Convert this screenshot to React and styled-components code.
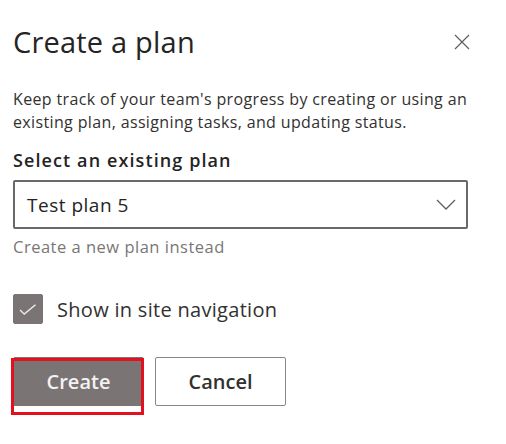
import React from "react";
import styled, { createGlobalStyle } from "styled-components";

const Global = createGlobalStyle`
  html, body { margin: 0; padding: 0; background: #ffffff; }
  body { font-family: "Open Sans", "Noto Sans", sans-serif; color: #323130; }
  * { box-sizing: border-box; }
`;

const Panel = styled.div`
  width: 506px;
  height: 444px;
  padding: 24px 38px 0 13px;
  display: flex;
  flex-direction: column;
  align-items: stretch;
`;

const Header = styled.div`
  display: flex;
  align-items: center;
  justify-content: space-between;
`;

const Title = styled.h1`
  margin: 0;
  font-size: 29px;
  line-height: 36px;
  letter-spacing: 0.2px;
  font-weight: 400;
  color: #252423;
`;

const CloseButton = styled.button`
  border: 0;
  background: none;
  padding: 0;
  margin-right: -2px;
  width: 16px;
  height: 16px;
  display: flex;
  color: #605e5c;
  cursor: pointer;
`;

const Description = styled.p`
  margin: 28px -14px 0 0;
  font-size: 16px;
  line-height: 23px;
  letter-spacing: 0.36px;
  color: #323130;
`;

const FieldLabel = styled.div`
  margin-top: 14px;
  font-size: 18px;
  line-height: 24px;
  letter-spacing: 1.1px;
  font-weight: 600;
  color: #252423;
`;

const Dropdown = styled.div`
  margin-top: 8px;
  height: 49px;
  border: 2px solid #6b6967;
  border-radius: 2px;
  display: flex;
  align-items: center;
  justify-content: space-between;
  padding: 0 10px 0 12px;
  font-size: 19px;
  letter-spacing: 0.5px;
  color: #252423;
`;

const Chevron = styled.svg`
  width: 20px;
  height: 11px;
  color: #605e5c;
`;

const Hint = styled.div`
  margin-top: 7px;
  font-size: 16.5px;
  line-height: 22px;
  letter-spacing: 0.5px;
  color: #797775;
`;

const CheckRow = styled.label`
  margin-top: 36px;
  display: flex;
  align-items: center;
  gap: 14px;
  font-size: 20px;
  letter-spacing: 0.3px;
  color: #323130;
`;

const CheckBox = styled.span`
  width: 30px;
  height: 30px;
  border-radius: 2px;
  background: ${(p) => (p.$checked ? "#7a7574" : "#ffffff")};
  border: 1px solid #7a7574;
  display: flex;
  align-items: center;
  justify-content: center;
`;

const Actions = styled.div`
  margin-top: 33px;
  display: flex;
  gap: 11px;
`;

const Button = styled.button`
  position: relative;
  width: 131px;
  height: 49px;
  border-radius: 2px;
  font-family: inherit;
  font-size: 20px;
  font-weight: 600;
  background: ${(p) => (p.$primary ? "#7a7574" : "#ffffff")};
  color: ${(p) => (p.$primary ? "#f3f2f1" : "#323130")};
  border: 1px solid ${(p) => (p.$primary ? "#7a7574" : "#8a8886")};
  padding: 0;
`;

const Highlight = styled.span`
  position: absolute;
  left: -3px;
  top: 0;
  right: -1px;
  bottom: -10px;
  border: 3px solid #e3111d;
  pointer-events: none;
`;

export default function App() {
  return (
    <>
      <Global />
      <Panel>
        <Header>
          <Title>Create a plan</Title>
          <CloseButton aria-label="Close">
            <svg width="16" height="16" viewBox="0 0 16 16">
              <path d="M1 1 L15 15 M15 1 L1 15" stroke="currentColor" strokeWidth="1.2" fill="none" />
            </svg>
          </CloseButton>
        </Header>
        <Description>
          Keep track of your team's progress by creating or using an existing plan, assigning tasks, and updating status.
        </Description>
        <FieldLabel>Select an existing plan</FieldLabel>
        <Dropdown>
          <span>Test plan 5</span>
          <Chevron viewBox="0 0 20 11">
            <path d="M1 1 L10 10 L19 1" stroke="currentColor" strokeWidth="1.3" fill="none" />
          </Chevron>
        </Dropdown>
        <Hint>Create a new plan instead</Hint>
        <CheckRow>
          <CheckBox $checked>
            <svg width="30" height="30" viewBox="0 0 30 30">
              <path d="M6.5 16 L11 20.5 L23 10.5" stroke="#eeeeee" strokeWidth="1.5" fill="none" />
            </svg>
          </CheckBox>
          Show in site navigation
        </CheckRow>
        <Actions>
          <Button $primary>
            Create
            <Highlight />
          </Button>
          <Button>Cancel</Button>
        </Actions>
      </Panel>
    </>
  );
}
